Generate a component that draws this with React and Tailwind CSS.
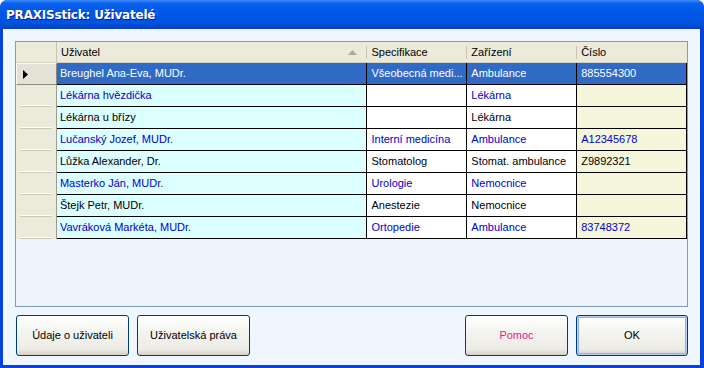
import React from "react";

const rows = [
  { name: "Breughel Ana-Eva, MUDr.", spec: "Všeobecná medi...", dev: "Ambulance", num: "885554300", blue: false, selected: true },
  { name: "Lékárna hvězdička", spec: "", dev: "Lékárna", num: "", blue: true },
  { name: "Lékárna u břízy", spec: "", dev: "Lékárna", num: "", blue: false },
  { name: "Lučanský Jozef, MUDr.", spec: "Interní medicína", dev: "Ambulance", num: "A12345678", blue: true },
  { name: "Lůžka Alexander, Dr.", spec: "Stomatolog", dev: "Stomat. ambulance", num: "Z9892321", blue: false },
  { name: "Masterko Ján, MUDr.", spec: "Urologie", dev: "Nemocnice", num: "", blue: true },
  { name: "Štejk Petr, MUDr.", spec: "Anestezie", dev: "Nemocnice", num: "", blue: false },
  { name: "Vavráková Markéta, MUDr.", spec: "Ortopedie", dev: "Ambulance", num: "83748372", blue: true },
];

function HeaderCell({ label, width, sort, first }) {
  return (
    <div
      className="relative flex h-full items-center bg-[#ebeadb] border-b border-b-[#d6d2c2] pl-[4px]"
      style={{ width }}
    >
      {!first && <div className="absolute left-0 top-[4px] h-[13px] w-px bg-[#c7c5b2]" />}
      <span className={first ? "pl-[0px]" : "pl-[1px]"}>{label}</span>
      {sort && (
        <svg className="absolute right-[9px] top-[8px]" width="9" height="5" viewBox="0 0 9 5">
          <path d="M4.5 0 L9 5 L0 5 Z" fill="#aca899" />
        </svg>
      )}
    </div>
  );
}

function XpButton({ children, w, pink, isDefault }) {
  return (
    <button
      className={`h-[41px] rounded-[3px] border border-[#003c74] bg-[linear-gradient(to_bottom,#ffffff_0%,#f4f4f0_40%,#ecebe6_85%,#d6d0c5_100%)] text-[11px] ${pink ? "text-[#f0148c]" : "text-black"} ${isDefault ? "shadow-[inset_0_0_0_1px_#b8d0f5,inset_0_0_0_2px_#8fb0e8]" : ""}`}
      style={{ width: w }}
    >
      {children}
    </button>
  );
}

export default function App() {
  return (
    <div className="w-[704px] h-[368px] bg-[#0842d8] rounded-t-[7px] flex flex-col font-['Tahoma','Liberation_Sans',sans-serif] text-[11px] text-black overflow-hidden">
      <div className="h-[29px] rounded-t-[7px] bg-[linear-gradient(to_bottom,#3c8cf8_0%,#0a60ee_12%,#0058e8_40%,#0054e3_75%,#0048d0_92%,#0a3fc0_100%)] flex items-center pl-[6px]">
        <span className="text-white font-bold text-[12px] font-['DejaVu_Sans',sans-serif] tracking-[-0.2px] [text-shadow:1px_1px_0_#0a1e8c]">
          PRAXISstick: Uživatelé
        </span>
      </div>
      <div className="flex-1 mx-[3px] mr-[4px] mb-[3px] bg-[#eff6fe] pt-[12px] pl-[12px] flex flex-col">
        <div className="w-[673px] h-[266px] border border-[#7f9db9] bg-[#eef4fc] flex flex-col">
          <div className="h-[21px] flex">
            <div className="w-[41px] h-full bg-[#ebeadb] border-b border-b-[#d6d2c2] border-r border-r-[#c7c5b2]" />
            <HeaderCell label="Uživatel" width={310} sort first />
            <HeaderCell label="Specifikace" width={100} />
            <HeaderCell label="Zařízení" width={110} />
            <HeaderCell label="Číslo" width={111} />
          </div>
          {rows.map((r) => {
            const txt = r.selected ? "text-white" : r.blue ? "text-[#0000cc]" : "text-black";
            return (
              <div key={r.name} className="h-[22px] flex">
                <div
                  className={`w-[41px] h-full relative ${r.selected ? "bg-[#e4e2d5] border border-[#f8f8f4] border-r-[#8c8a7d] border-b-[#8c8a7d]" : "bg-[#ebeadb] border-r border-r-[#9d9b8c]"}`}
                >
                  {r.selected ? (
                    <svg className="absolute left-[6px] top-[6px]" width="5" height="9" viewBox="0 0 5 9">
                      <path d="M0 0 L5 4.5 L0 9 Z" fill="#000" />
                    </svg>
                  ) : (
                    <div className="absolute left-[4px] right-[4px] bottom-0 h-[2px] border-b border-b-[#cac8b8] border-t border-t-[#ffffff]" />
                  )}
                </div>
                <div className={`w-[310px] h-full flex items-center pl-[3px] border-b border-b-black ${r.selected ? "bg-[#316ac5]" : "bg-[#dcffff]"} ${txt}`}>
                  {r.name}
                </div>
                <div className={`w-[100px] h-full flex items-center pl-[4px] border-l border-l-black border-b border-b-black ${r.selected ? "bg-[#316ac5]" : "bg-white"} ${txt}`}>
                  {r.spec}
                </div>
                <div className={`w-[110px] h-full flex items-center pl-[4px] border-l border-l-black border-b border-b-black ${r.selected ? "bg-[#316ac5]" : "bg-white"} ${txt}`}>
                  {r.dev}
                </div>
                <div className={`w-[111px] h-full flex items-center pl-[4px] border-l border-l-black border-b border-b-black border-r border-r-black ${r.selected ? "bg-[#316ac5]" : "bg-[#f5f5dc]"} ${txt}`}>
                  {r.num}
                </div>
              </div>
            );
          })}
        </div>
        <div className="mt-[8px] flex items-start">
          <div className="ml-[1px] flex gap-[8px]">
            <XpButton w={113}>Údaje o uživateli</XpButton>
            <XpButton w={113}>Uživatelská práva</XpButton>
          </div>
          <div className="ml-auto mr-[12px] flex gap-[8px]">
            <XpButton w={103} pink>Pomoc</XpButton>
            <XpButton w={112} isDefault>OK</XpButton>
          </div>
        </div>
      </div>
    </div>
  );
}
